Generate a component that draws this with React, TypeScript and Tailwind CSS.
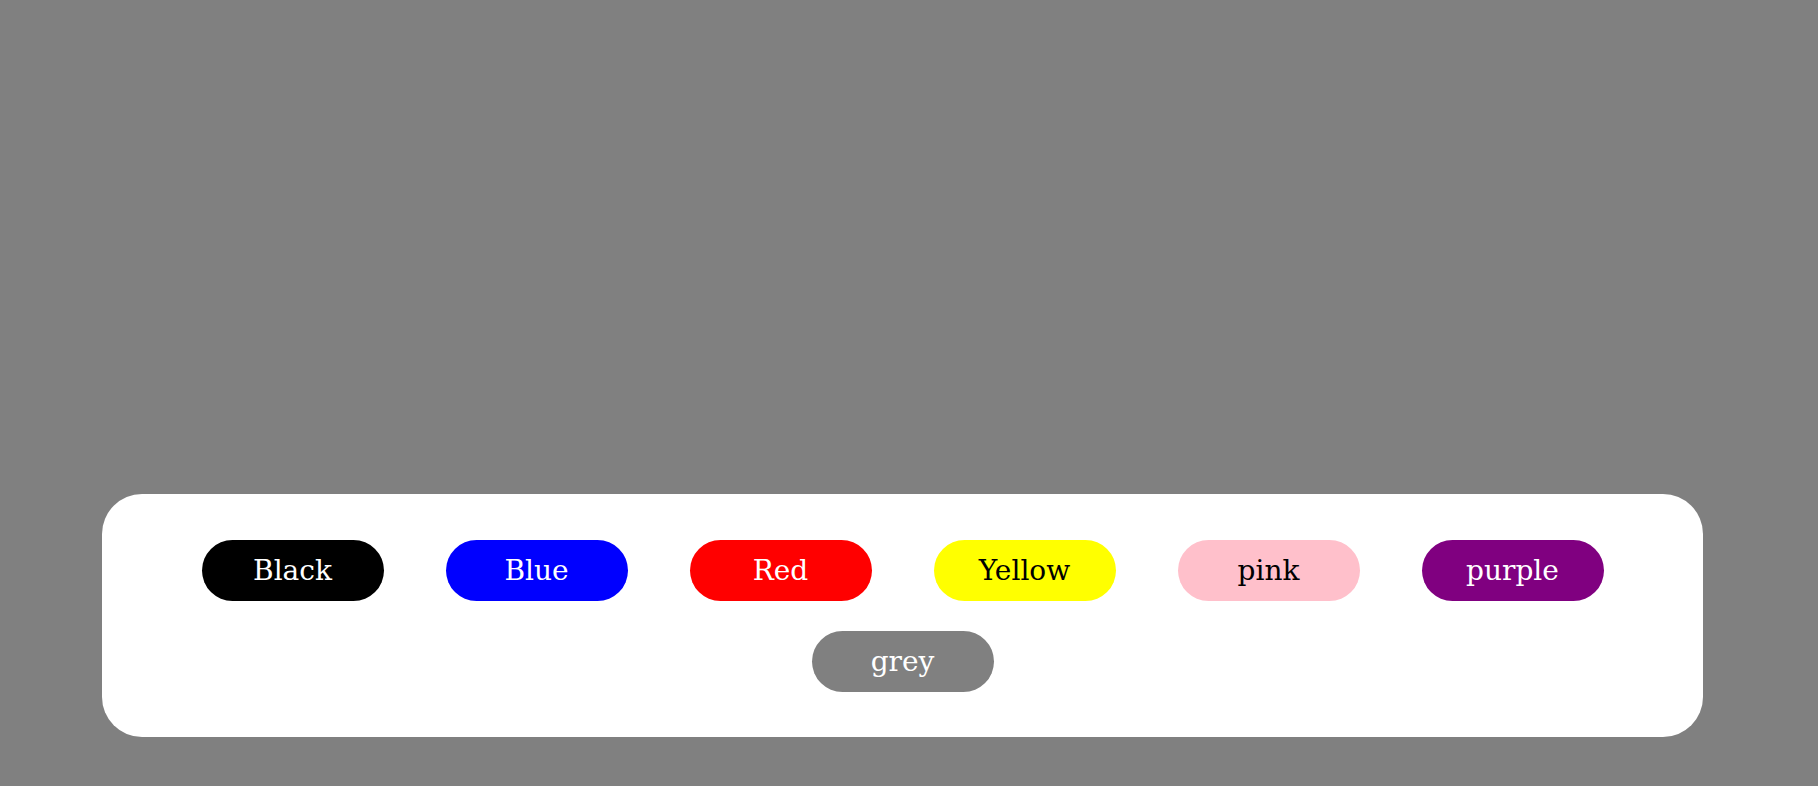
const colors = [
  { name: "Black", cls: "bg-[#000000] text-white" },
  { name: "Blue", cls: "bg-[#0000ff] text-white" },
  { name: "Red", cls: "bg-[#ff0000] text-white" },
  { name: "Yellow", cls: "bg-[#ffff00] text-black" },
  { name: "pink", cls: "bg-[#ffc0cb] text-black" },
  { name: "purple", cls: "bg-[#800080] text-white" },
  { name: "grey", cls: "bg-[#808080] text-white" },
];

export default function App() {
  return (
    <div className="min-h-screen bg-[#808080] pt-[494px] pl-[102px] font-['DejaVu_Serif',serif]">
      <div className="w-[1601px] rounded-[40px] bg-white pt-[31px] pb-[30px] flex flex-wrap justify-center">
        {colors.map((c) => (
          <button
            key={c.name}
            className={`w-[182px] h-[61px] mx-[31px] my-[15px] rounded-full flex items-center justify-center text-[28px] leading-none ${c.cls}`}
          >
            {c.name}
          </button>
        ))}
      </div>
    </div>
  );
}
